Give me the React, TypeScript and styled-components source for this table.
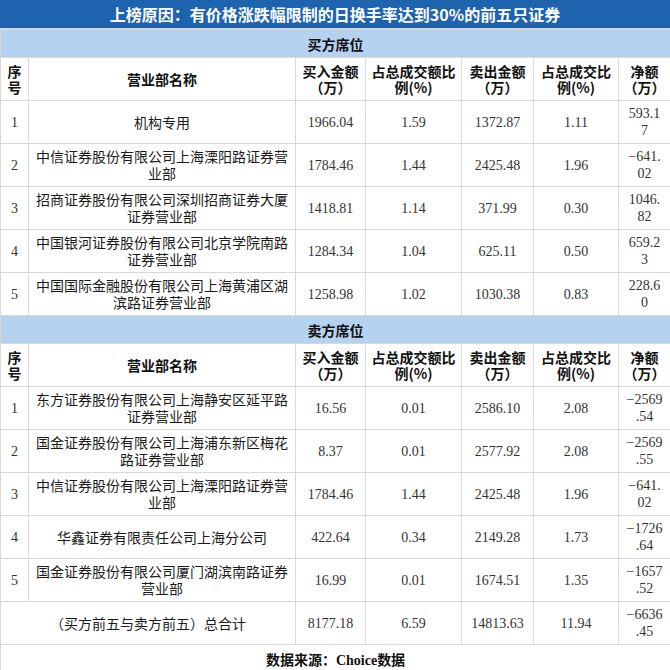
import React from 'react';
import styled, {createGlobalStyle} from 'styled-components';

type Row = {
    no: string;
    name: string;
    buy: string;
    buyRatio: string;
    sell: string;
    sellRatio: string;
    net: string;
};

const buyRows: Row[] = [
    {no: '1', name: '机构专用', buy: '1966.04', buyRatio: '1.59', sell: '1372.87', sellRatio: '1.11', net: '593.17'},
    {no: '2', name: '中信证券股份有限公司上海溧阳路证券营业部', buy: '1784.46', buyRatio: '1.44', sell: '2425.48', sellRatio: '1.96', net: '−641.02'},
    {no: '3', name: '招商证券股份有限公司深圳招商证券大厦证券营业部', buy: '1418.81', buyRatio: '1.14', sell: '371.99', sellRatio: '0.30', net: '1046.82'},
    {no: '4', name: '中国银河证券股份有限公司北京学院南路证券营业部', buy: '1284.34', buyRatio: '1.04', sell: '625.11', sellRatio: '0.50', net: '659.23'},
    {no: '5', name: '中国国际金融股份有限公司上海黄浦区湖滨路证券营业部', buy: '1258.98', buyRatio: '1.02', sell: '1030.38', sellRatio: '0.83', net: '228.60'},
];

const sellRows: Row[] = [
    {no: '1', name: '东方证券股份有限公司上海静安区延平路证券营业部', buy: '16.56', buyRatio: '0.01', sell: '2586.10', sellRatio: '2.08', net: '−2569.54'},
    {no: '2', name: '国金证券股份有限公司上海浦东新区梅花路证券营业部', buy: '8.37', buyRatio: '0.01', sell: '2577.92', sellRatio: '2.08', net: '−2569.55'},
    {no: '3', name: '中信证券股份有限公司上海溧阳路证券营业部', buy: '1784.46', buyRatio: '1.44', sell: '2425.48', sellRatio: '1.96', net: '−641.02'},
    {no: '4', name: '华鑫证券有限责任公司上海分公司', buy: '422.64', buyRatio: '0.34', sell: '2149.28', sellRatio: '1.73', net: '−1726.64'},
    {no: '5', name: '国金证券股份有限公司厦门湖滨南路证券营业部', buy: '16.99', buyRatio: '0.01', sell: '1674.51', sellRatio: '1.35', net: '−1657.52'},
];

const GlobalStyle = createGlobalStyle`
    body {
        margin: 0;
        background: #fff;
        font-family: "Noto Sans CJK SC", sans-serif;
    }
`;

const HeaderRow: React.FunctionComponent = () => (
    <tr>
        <HeadCell>序号</HeadCell>
        <HeadCell>营业部名称</HeadCell>
        <HeadCell>买入金额（万）</HeadCell>
        <HeadCell>占总成交额比例(%)</HeadCell>
        <HeadCell>卖出金额（万）</HeadCell>
        <HeadCell>占总成交比例(%)</HeadCell>
        <HeadCell>净额（万）</HeadCell>
    </tr>
);

const DataRow: React.FunctionComponent<{row: Row}> = ({row}) => (
    <tr>
        <NumCell>{row.no}</NumCell>
        <NameCell>{row.name}</NameCell>
        <NumCell>{row.buy}</NumCell>
        <NumCell>{row.buyRatio}</NumCell>
        <NumCell>{row.sell}</NumCell>
        <NumCell>{row.sellRatio}</NumCell>
        <NumCell><Net>{row.net}</Net></NumCell>
    </tr>
);

const App: React.FunctionComponent = () => {
    return (
        <>
            <GlobalStyle/>
            <Wrapper>
                <Title>上榜原因：有价格涨跌幅限制的日换手率达到30%的前五只证券</Title>
                <Table>
                    <colgroup>
                        <col style={{width: 28}}/>
                        <col style={{width: 267}}/>
                        <col style={{width: 70}}/>
                        <col style={{width: 96}}/>
                        <col style={{width: 72}}/>
                        <col style={{width: 85}}/>
                        <col style={{width: 52}}/>
                    </colgroup>
                    <tbody>
                        <tr><Section colSpan={7}>买方席位</Section></tr>
                        <HeaderRow/>
                        {buyRows.map(r => <DataRow key={'b' + r.no} row={r}/>)}
                        <tr><Section colSpan={7}>卖方席位</Section></tr>
                        <HeaderRow/>
                        {sellRows.map(r => <DataRow key={'s' + r.no} row={r}/>)}
                        <tr>
                            <NameCell colSpan={2}>（买方前五与卖方前五）总合计</NameCell>
                            <NumCell>8177.18</NumCell>
                            <NumCell>6.59</NumCell>
                            <NumCell>14813.63</NumCell>
                            <NumCell>11.94</NumCell>
                            <NumCell><Net>−6636.45</Net></NumCell>
                        </tr>
                        <tr><Footer colSpan={7}>数据来源：<Latin>Choice</Latin>数据</Footer></tr>
                    </tbody>
                </Table>
            </Wrapper>
        </>
    );
}

const Wrapper = styled.div`
    width: 670px;
    height: 670px;
    overflow: hidden;
`;

const Title = styled.div`
    height: 29px;
    line-height: 29px;
    background-color: #1e63ad;
    color: #fff;
    font-size: 16px;
    font-weight: 700;
    text-align: center;
    border-bottom: 1px solid #d4d4d4;
    box-sizing: border-box;
`;

const Table = styled.table`
    width: 670px;
    table-layout: fixed;
    border-collapse: collapse;
    td {
        border: 1px solid #d9d9d9;
        padding: 0 4px;
        text-align: center;
        overflow: hidden;
    }
`;

const Section = styled.td`
    height: 27px;
    background-color: #b5d3f1;
    font-size: 14px;
    font-weight: 700;
    color: #111;
`;

const HeadCell = styled.td`
    height: 42px;
    font-size: 14px;
    font-weight: 700;
    line-height: 16px;
    color: #111;
`;

const NameCell = styled.td`
    height: 42px;
    font-size: 14px;
    line-height: 17px;
    color: #1a1a1a;
`;

const NumCell = styled.td`
    height: 42px;
    font-family: "Liberation Serif", serif;
    font-size: 14px;
    line-height: 17px;
    color: #333;
`;

const Net = styled.span`
    display: inline-block;
    width: 37px;
    line-break: anywhere;
    word-break: break-all;
`;

const Footer = styled.td`
    height: 27px;
    font-size: 14px;
    font-weight: 700;
    color: #111;
`;

const Latin = styled.span`
    font-family: "Liberation Serif", serif;
`;

export default App;
